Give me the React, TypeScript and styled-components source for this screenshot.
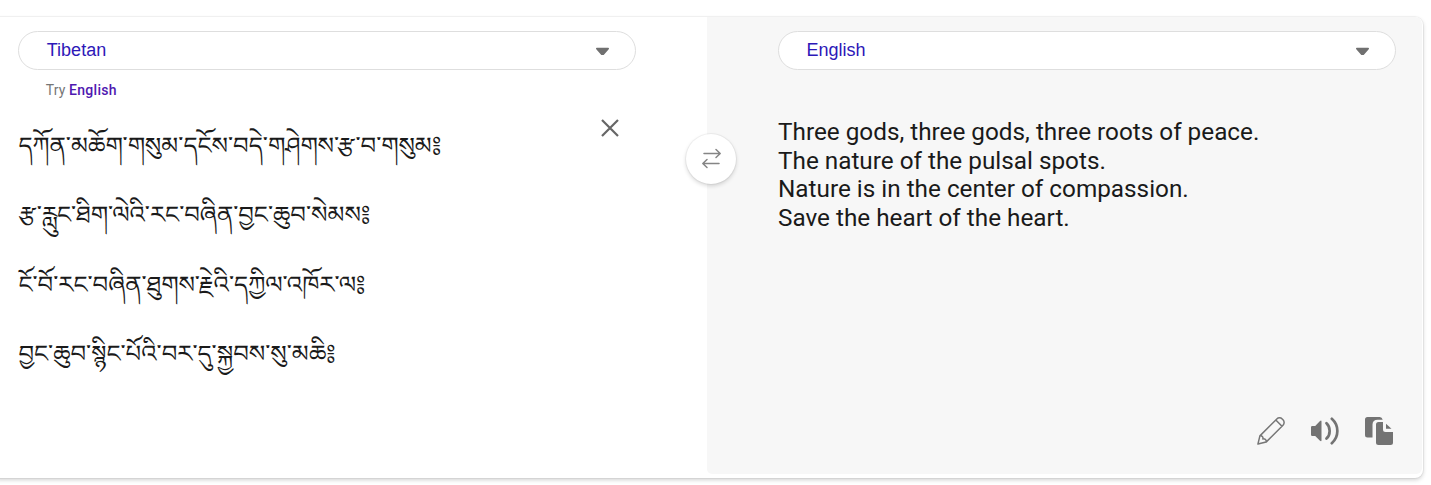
import React from 'react';
import styled, { createGlobalStyle } from 'styled-components';

const GlobalStyle = createGlobalStyle`
  * { box-sizing: border-box; }
  body { margin: 0; background: #fff; font-family: Roboto, "Liberation Sans", sans-serif; overflow: hidden; }
`;

const Page = styled.main`
  height: 485px;
  padding: 17px 8px 6px 0;
`;

const Card = styled.section`
  position: relative;
  display: flex;
  height: 461px;
  margin-left: -10px;
  padding: 0 1px 4px 10px;
  border-radius: 8px;
  background: #fff;
  box-shadow: 0 0 0 1px rgba(0, 0, 0, 0.04), 0 2px 4px rgba(0, 0, 0, 0.18);
`;

const Panel = styled.div<{ $target?: boolean }>`
  display: flex;
  flex-direction: column;
  width: ${p => (p.$target ? 'auto' : '707px')};
  flex: ${p => (p.$target ? '1' : 'none')};
  padding: ${p => (p.$target ? '14px 26px 29px 71px' : '14px 70.5px 0 18.4px')};
  background: ${p => (p.$target ? '#f7f7f7' : '#fff')};
  border-radius: ${p => (p.$target ? '0 7px 6px 5px' : '0')};
`;

const Selector = styled.button`
  display: flex;
  align-items: center;
  justify-content: space-between;
  width: 618px;
  height: 39px;
  flex: none;
  padding: 0 26px 1px 27.4px;
  border: 1.5px solid #dedede;
  border-radius: 20px;
  background: #fff;
  color: #2d18b8;
  font: 18px/20px "Liberation Sans", Arial, sans-serif;
`;

const Suggestion = styled.p`
  margin: 11px 0 0 27.4px;
  color: #767676;
  font-size: 14px;
  line-height: 18px;
  letter-spacing: 0.1px;
`;

const SuggestedLanguage = styled.a`
  color: #4f18b0;
  font-weight: 500;
  letter-spacing: 0.3px;
`;

const SourceArea = styled.div`
  display: flex;
  justify-content: space-between;
  padding: 9px 16.5px 0 0;
`;

const SourceText = styled.div`
  padding-top: 10px;
  color: #1a1a1a;
  font-family: "Noto Serif Tibetan", "Noto Sans Tibetan", serif;
  font-size: 24.35px;
  white-space: nowrap;
`;

const Verse = styled.p`
  height: 69.3px;
  margin: 0;
  line-height: 69px;
`;

const ClearButton = styled.button`
  display: flex;
  height: 20px;
  margin-top: 11px;
  padding: 0;
  border: 0;
  background: none;
`;

const Translation = styled.div`
  margin-top: 48px;
  color: #1a1a1a;
  font-size: 24.3px;
  line-height: 28.6px;
  white-space: pre-line;
`;

const Actions = styled.div`
  display: flex;
  align-items: center;
  justify-content: flex-end;
  gap: 26px;
  margin-top: auto;
  padding-right: 3px;
`;

const IconButton = styled.button`
  display: flex;
  padding: 0;
  border: 0;
  background: none;
`;

const SwapButton = styled.button`
  position: absolute;
  top: 117px;
  left: 696px;
  display: flex;
  align-items: center;
  justify-content: center;
  width: 50px;
  height: 50px;
  padding: 0;
  border: 0;
  border-radius: 50%;
  background: #fff;
  box-shadow: 0 0 0 1px rgba(0, 0, 0, 0.04), 0 2px 4px rgba(0, 0, 0, 0.16);
`;

const verses = [
  'དཀོན་མཆོག་གསུམ་དངོས་བདེ་གཤེགས་རྩ་བ་གསུམ༔',
  'རྩ་རླུང་ཐིག་ལེའི་རང་བཞིན་བྱང་ཆུབ་སེམས༔',
  'ངོ་བོ་རང་བཞིན་ཐུགས་རྗེའི་དཀྱིལ་འཁོར་ལ༔',
  'བྱང་ཆུབ་སྙིང་པོའི་བར་དུ་སྐྱབས་སུ་མཆི༔',
];

const translation = `Three gods, three gods, three roots of peace.
The nature of the pulsal spots.
Nature is in the center of compassion.
Save the heart of the heart.`;

const Caret = () => (
  <svg width="13" height="9" viewBox="0 0 13 9">
    <path d="M.8.8Q0 .8 0 1.5q0 .5.5 1l4.8 5.4q1.2 1 2.4 0l4.8-5.4q.5-.5.5-1 0-.7-.8-.7Z" fill="#707070" transform="translate(0 1)" />
  </svg>
);

const Cross = () => (
  <svg width="20" height="20" viewBox="0 0 20 20">
    <path d="m2 1 16 16m0-16-16 16" stroke="#666" strokeWidth="2.2" />
  </svg>
);

const Swap = () => (
  <svg width="22" height="22" viewBox="0 0 22 22" fill="none" stroke="#858585" strokeWidth="1.5" strokeLinecap="round" strokeLinejoin="round">
    <path d="M4 5.5h16m-4-4 4.2 4-4.2 4M19 15.5H3m4-4-4.2 4 4.2 4" />
  </svg>
);

const Pencil = () => (
  <svg width="28" height="28" viewBox="0 0 28 28" fill="none" stroke="#767676" strokeWidth="1.5" strokeLinejoin="round">
    <path d="m.9 27.1 2-8.2L19.8 2a3.8 3.8 0 0 1 5.4 0l.8.8a3.8 3.8 0 0 1 0 5.4L9.1 25.1ZM2.9 18.9c2-.5 3.5.9 3 3 2-.5 3.8 1.1 3.2 3.2M18.8 3l6.2 6.2" />
  </svg>
);

const Speaker = () => (
  <svg width="28" height="28" viewBox="0 0 28 28" fill="none">
    <path d="M1.2 9h3L9 4q1.5-1.2 1.5.5v18.8q0 1.7-1.5.5l-4.8-4.9h-3Q0 18.9 0 17.7v-7.5Q0 9 1.2 9Z" fill="#737373" />
    <path d="M15.5 6.2c4.2 3.9 4.2 11.5 0 15.4M20.8 1.8c7.4 6.6 7.4 17.8 0 24.4" stroke="#737373" strokeWidth="2.7" strokeLinecap="round" />
  </svg>
);

const Copy = () => (
  <svg width="28" height="28" viewBox="0 0 28 28" fill="#737373">
    <path d="M2.5 0h12.2q2.3 0 3 2.8h-4.9Q7.5 2.8 7.5 7.6v12.9h-5Q0 20.5 0 18v-15.500Q0 0 2.500 0Z" />
    <path d="M13.500 5h4.500v7.500q0 2.500 2.500 2.500H28v10.500q0 2.500-2.500 2.500h-12Q11 28 11 25.500V7.500q0-2.500 2.500-2.500ZM21 6.800l5.500 5h-5.500Z" />
  </svg>
);

export default function App() {
  return (
    <>
      <GlobalStyle />
      <Page>
        <Card>
          <Panel>
            <Selector>Tibetan<Caret /></Selector>
            <Suggestion>Try <SuggestedLanguage>English</SuggestedLanguage></Suggestion>
            <SourceArea>
              <SourceText lang="bo">
                {verses.map(verse => <Verse key={verse}>{verse}</Verse>)}
              </SourceText>
              <ClearButton aria-label="Clear text"><Cross /></ClearButton>
            </SourceArea>
          </Panel>
          <Panel $target>
            <Selector>English<Caret /></Selector>
            <Translation>{translation}</Translation>
            <Actions>
              <IconButton aria-label="Edit"><Pencil /></IconButton>
              <IconButton aria-label="Listen"><Speaker /></IconButton>
              <IconButton aria-label="Copy"><Copy /></IconButton>
            </Actions>
          </Panel>
          <SwapButton aria-label="Swap languages"><Swap /></SwapButton>
        </Card>
      </Page>
    </>
  );
}
